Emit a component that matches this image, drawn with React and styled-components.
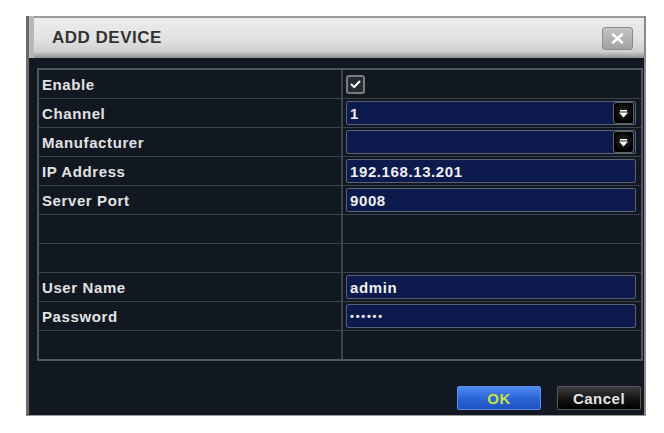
import React from 'react'
import styled, { createGlobalStyle } from 'styled-components'

const Global = createGlobalStyle`
body {
    margin: 0;
    background: #ffffff;
    font-family: "Liberation Sans", Arial, sans-serif;
}
`

const Janela = styled.div`
width: 615px;
height: 399px;
margin: 16px 0 0 26px;
display: flex;
flex-direction: column;
border-left: 3px solid #6a6a6a;
border-right: 2px solid #8a8a8a;
border-bottom: 1px solid #9a9a9a;
background: #121821;
`

const BarraTitulo = styled.div`
height: 42px;
display: flex;
align-items: center;
justify-content: space-between;
padding: 2px 11px 0 23px;
box-sizing: border-box;
background: linear-gradient(#9a9a9a 0, #9a9a9a 2px, #ececec 2px, #e2e2e2 55%, #cfcfcf 85%, #8e8e8e 100%);
box-shadow: inset 5px 0 0 #b8b8b8;

h1 {
    margin: 0;
    font-size: 17px;
    letter-spacing: 0.5px;
    font-weight: bold;
    color: #333;
}
`

const BotaoFechar = styled.div`
width: 29px;
height: 21px;
border-radius: 3px;
border: 1px solid #8c8c8c;
background: linear-gradient(#c4c4c4, #a2a2a2);
display: flex;
align-items: center;
justify-content: center;
`

const Corpo = styled.div`
flex: 1;
display: flex;
flex-direction: column;
padding: 10px 1px 5px 8px;
`

const Tabela = styled.div`
border: 2px solid #50565e;
display: grid;
grid-template-columns: 304px 1fr;
`

const Celula = styled.div`
height: 28px;
border-bottom: 1px solid #3e444c;
border-right: ${p => (p.$rotulo ? '2px solid #3e444c' : 'none')};
display: flex;
align-items: center;
padding: ${p => (p.$rotulo ? '0 0 0 3px' : '0 5px 0 3px')};
color: #e2e2e2;
font-size: 15px;
letter-spacing: 0.6px;
font-weight: bold;
background: #121822;

&:nth-last-child(-n + 2) {
    border-bottom: none;
}
`

const Campo = styled.div`
flex: 1;
height: 22px;
border: 1px solid #5b6372;
border-radius: 2px;
background: #0c1a4d;
display: flex;
align-items: center;
padding-left: 3px;
color: #f0f0f0;
font-size: 15px;
letter-spacing: 0.6px;
font-weight: bold;
`

const Pontos = styled.span`
font-size: 11px;
letter-spacing: 1.8px;
`

const Seta = styled.div`
width: 19px;
height: 20px;
margin: 0 1px 0 auto;
border-radius: 3px;
background: radial-gradient(circle at 50% 45%, #2a2a2a, #000 70%);
border: 1px solid #666;
display: flex;
align-items: center;
justify-content: center;
`

const Caixa = styled.div`
width: 15px;
height: 15px;
border: 2px solid #7c7c7c;
border-radius: 3px;
background: #262a30;
display: flex;
align-items: center;
justify-content: center;
`

const Rodape = styled.div`
flex: 1;
display: flex;
align-items: flex-end;
justify-content: flex-end;
gap: 16px;
padding-right: 2px;
`

const Botao = styled.button`
width: ${p => p.$largura}px;
height: 24px;
border-radius: 2px;
font-family: "Liberation Sans", Arial, sans-serif;
font-size: 15px;
font-weight: bold;
letter-spacing: 0.5px;
color: ${p => (p.$azul ? '#c6e23c' : '#e4e4e4')};
border: 1px solid ${p => (p.$azul ? '#5f8fe6' : '#5a5a5a')};
background: ${p => (p.$azul
    ? 'linear-gradient(#4a8cf0, #2a62d4 55%, #1e52c0)'
    : 'linear-gradient(#3c3c3c, #141414 55%, #000)')};
`

const Seletor = ({ valor }) => (
    <Campo>
        {valor}
        <Seta>
            <svg width="11" height="9" viewBox="0 0 11 9">
                <rect x="2" y="1" width="7" height="1.5" fill="#fff" />
                <path d="M1 3.5 H10 L5.5 8.5 Z" fill="#fff" />
            </svg>
        </Seta>
    </Campo>
)

const linhas = [
    ['Enable', 'check'],
    ['Channel', 'select', '1'],
    ['Manufacturer', 'select', ''],
    ['IP Address', 'text', '192.168.13.201'],
    ['Server Port', 'text', '9008'],
    ['', null],
    ['', null],
    ['User Name', 'text', 'admin'],
    ['Password', 'senha', '••••••'],
    ['', null]
]

export default function App() {
    return (
        <>
            <Global />
            <Janela>
                <BarraTitulo>
                    <h1>ADD DEVICE</h1>
                    <BotaoFechar>
                        <svg width="13" height="11" viewBox="0 0 13 11">
                            <path d="M2 1.5 L11 9.5 M11 1.5 L2 9.5" stroke="#fff" strokeWidth="2.4" strokeLinecap="round" />
                        </svg>
                    </BotaoFechar>
                </BarraTitulo>
                <Corpo>
                    <Tabela>
                        {linhas.map(([rotulo, tipo, valor], i) => (
                            <React.Fragment key={i}>
                                <Celula $rotulo>{rotulo}</Celula>
                                <Celula>
                                    {tipo === 'check' && (
                                        <Caixa>
                                            <svg width="11" height="9" viewBox="0 0 11 9">
                                                <path d="M1.5 4.5 L4.2 7 L9.5 1.5" stroke="#fff" strokeWidth="2" fill="none" strokeLinecap="round" />
                                            </svg>
                                        </Caixa>
                                    )}
                                    {tipo === 'select' && <Seletor valor={valor} />}
                                    {tipo === 'text' && <Campo>{valor}</Campo>}
                                    {tipo === 'senha' && <Campo><Pontos>{valor}</Pontos></Campo>}
                                </Celula>
                            </React.Fragment>
                        ))}
                    </Tabela>
                    <Rodape>
                        <Botao $azul $largura={84}>OK</Botao>
                        <Botao $largura={84}>Cancel</Botao>
                    </Rodape>
                </Corpo>
            </Janela>
        </>
    )
}
